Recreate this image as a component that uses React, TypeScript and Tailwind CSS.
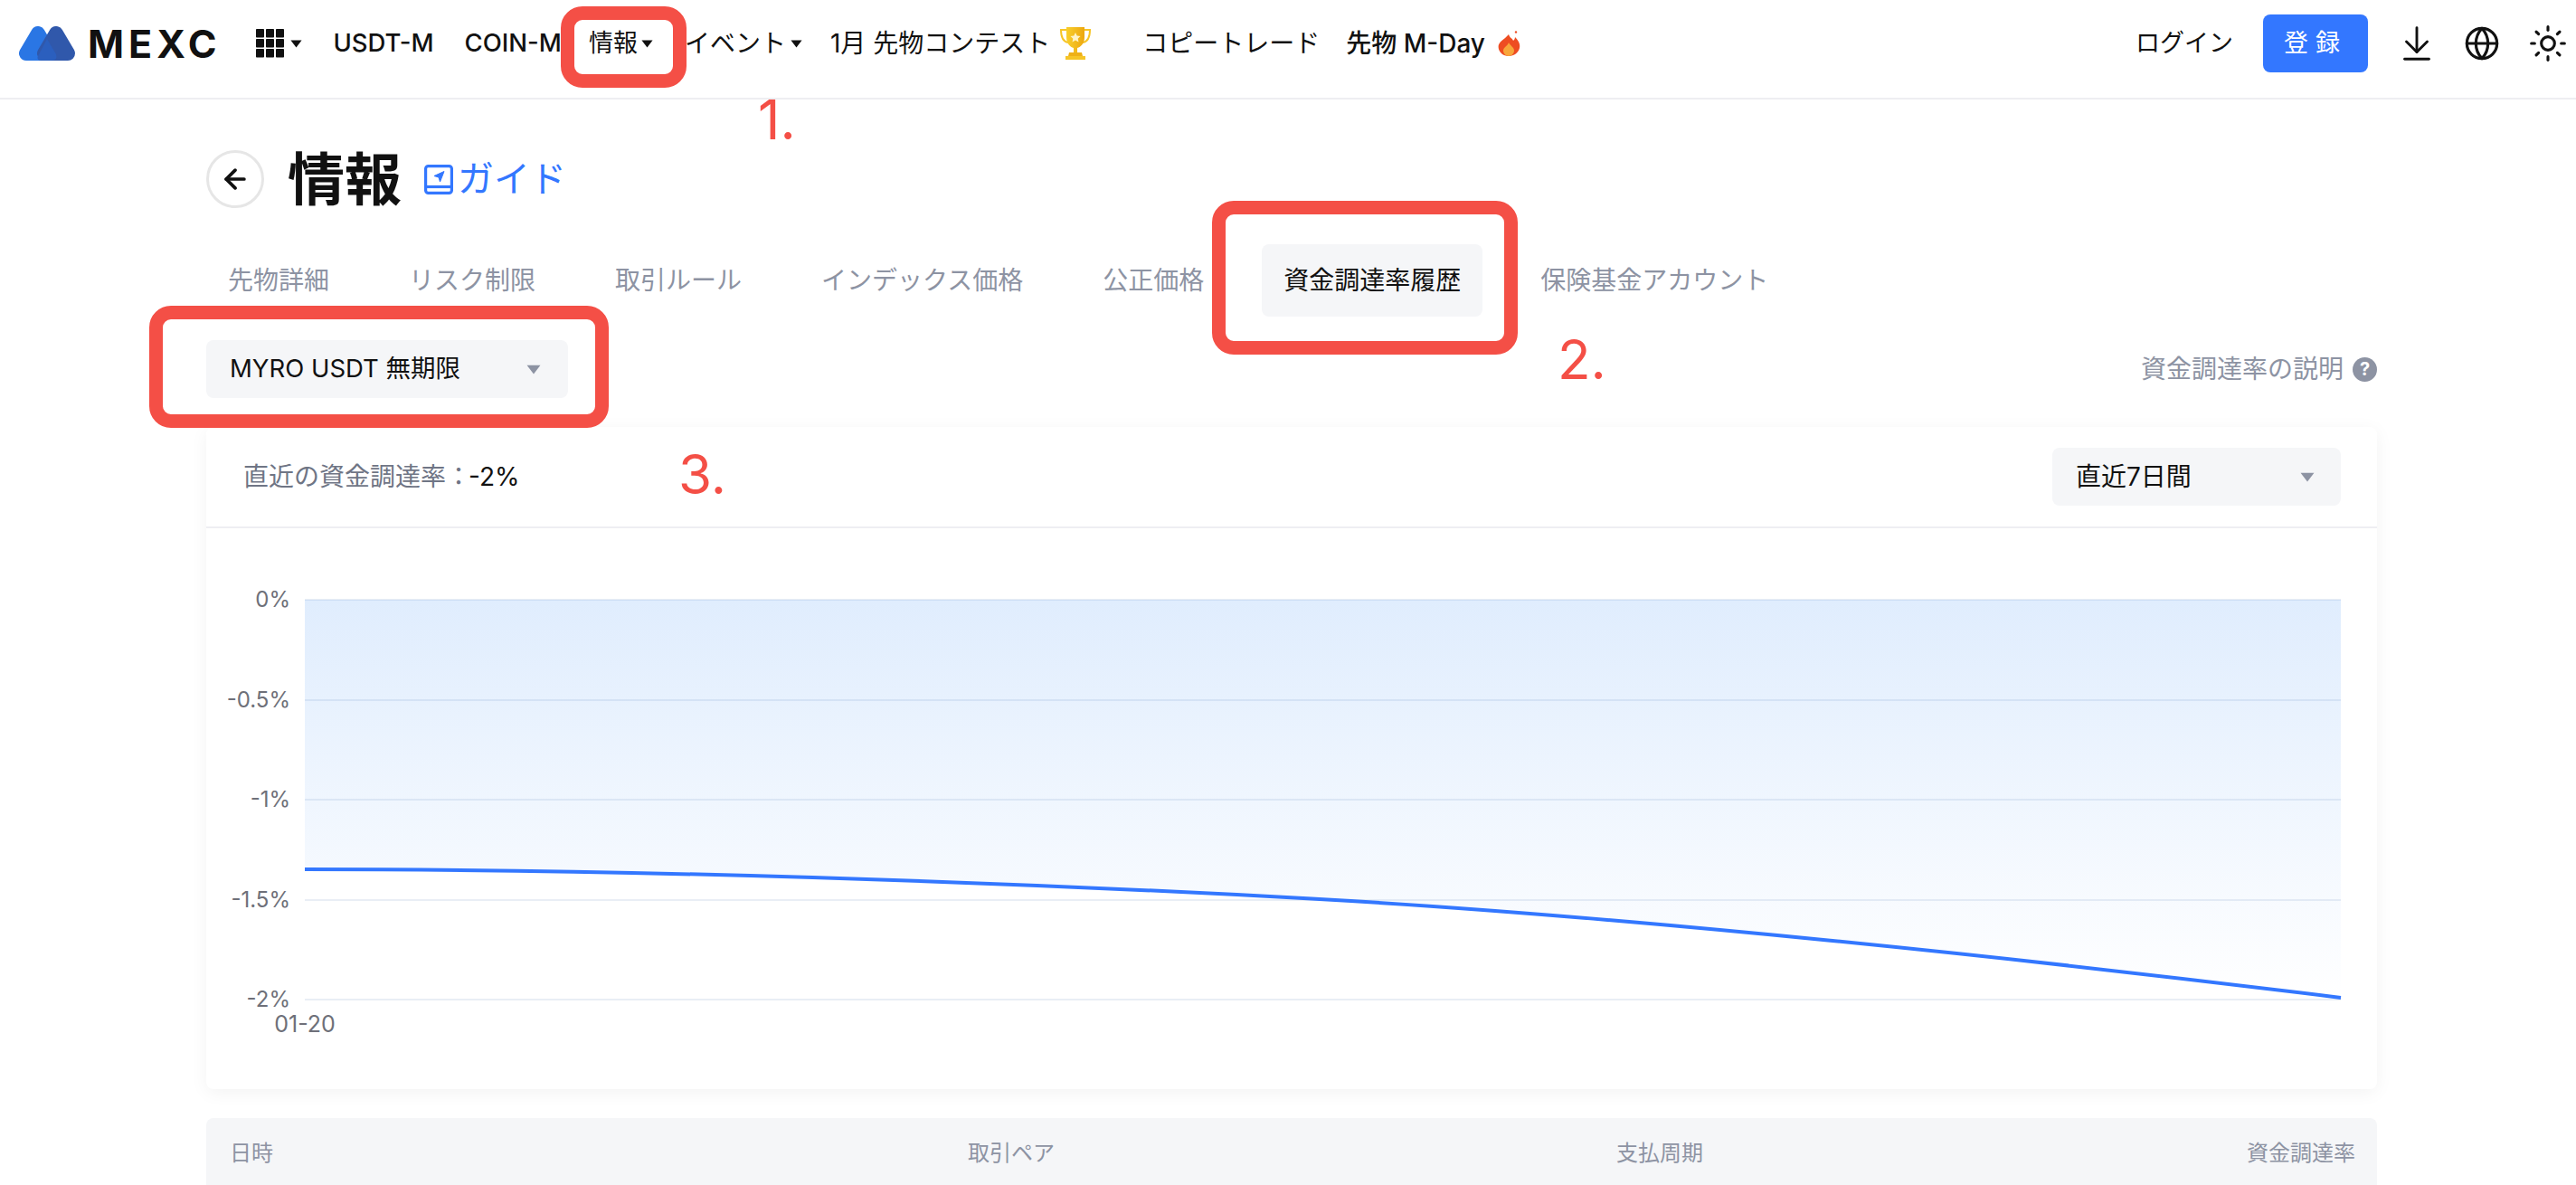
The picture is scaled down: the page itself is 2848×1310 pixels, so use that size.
import { ArrowLeft, ArrowDownToLine, Globe, Sun } from "lucide-react";

const FONT = "font-['Inter','Noto_Sans_CJK_JP',sans-serif]";

const Caret = ({ className }: { className: string }) => (
  <svg viewBox="0 0 12 8" className={`shrink-0 ${className}`} fill="currentColor">
    <path d="M0.4 0.4h11.2L6 7.800z" />
  </svg>
);

const Logo = () => (
  <svg viewBox="0 0 62 38" className="h-[38px] w-[62px] shrink-0">
    <polygon points="21,8 8,30 34,30" fill="#2a76e4" stroke="#2a76e4" strokeWidth="16" strokeLinejoin="round" />
    <polygon points="41,8 28,30 54,30" fill="#3058ab" stroke="#3058ab" strokeWidth="16" strokeLinejoin="round" />
    <path d="M31 14 L41 31 Q43 38 36 38 L25 38 Q20 38 20.5 34z" fill="#2b5fbe" />
  </svg>
);

const GridIcon = () => (
  <svg viewBox="0 0 31 32" className="h-[32px] w-[31px] shrink-0" fill="#111">
    {[0, 11, 22].map((y) =>
      [0, 11, 22].map((x) => <rect key={`${x}-${y}`} x={x} y={y} width="9" height="9.6" rx="0.8" />)
    )}
  </svg>
);

const Trophy = () => (
  <svg viewBox="0 0 36 36" className="h-[36px] w-[36px]">
    <defs>
      <linearGradient id="cup" x1="0" y1="0" x2="1" y2="0">
        <stop offset="0" stopColor="#f8cf2c" />
        <stop offset="1" stopColor="#eda70f" />
      </linearGradient>
    </defs>
    <path d="M8 3H2c0 8 2 13 8 14M28 3h6c0 8-2 13-8 14" fill="none" stroke="#f6c527" strokeWidth="2" />
    <path d="M8 0h20v11c0 7-4 11-8 12v5h-4v-5c-4-1-8-5-8-12z" fill="url(#cup)" />
    <path d="M11 28h14l1 4H10z" fill="#eeb017" />
    <rect x="7" y="32" width="22" height="4" fill="#f6c527" />
    <path d="M18 6l1.7 3.6 3.8.5-2.8 2.6.8 3.9-3.5-2-3.5 2 .8-3.9-2.8-2.6 3.8-.5z" fill="#fff4c8" />
  </svg>
);

const Flame = () => (
  <svg viewBox="0 0 25 28" className="h-[28px] w-[25px]">
    <path d="M12 4c1 4 4 4 5 7 1-1 2-2 2-4 4 4 6 8 5 12-1 5-6 9-12 9S1 24 0.600 18C0.400 12 7 10 12 4z" fill="#ee4d22" />
    <path d="M12 13c1 3 6 5 6 9 0 3-3 6-6 6s-6-3-6-6c0-4 5-5 6-9z" fill="#f8a63a" />
    <circle cx="20" cy="1.500" r="1.200" fill="#ee4d22" />
  </svg>
);

const GuideIcon = () => (
  <svg viewBox="0 0 32 33" className="h-[33px] w-[32px]" fill="none" stroke="#3377ff" strokeWidth="3.200">
    <rect x="1.600" y="1.600" width="28.800" height="29.800" rx="3" />
    <path d="M1.600 24.500h28.800" />
    <path d="M22 7.500l-11 5 5 1.500 1.500 5z" fill="#3377ff" strokeWidth="1" strokeLinejoin="round" />
  </svg>
);

const tabs = ["先物詳細", "リスク制限", "取引ルール", "インデックス価格", "公正価格", "資金調達率履歴", "保険基金アカウント"];

const FundingChart = () => {
  const grid = [
    { label: "0%", y: 663 },
    { label: "-0.5%", y: 774 },
    { label: "-1%", y: 884 },
    { label: "-1.5%", y: 995 },
    { label: "-2%", y: 1105 },
  ];
  // chart coordinates are page coordinates minus the top left of the svg
  const ox = 228;
  const oy = 584;
  const curve = "M337 961 C 700 961, 1100 974.250, 1450 993.500 C 1800 1012.750, 2250 1061, 2588 1103";
  return (
    <svg viewBox={`${ox} ${oy} 2400 620`} className="block h-[620px] w-[2400px]">
      <defs>
        <linearGradient id="area" gradientUnits="userSpaceOnUse" x1="0" y1="663" x2="0" y2="1105">
          <stop offset="0" stopColor="#2f86f5" stopOpacity="0.15" />
          <stop offset="1" stopColor="#2f86f5" stopOpacity="0" />
        </linearGradient>
      </defs>
      {grid.map((g) => (
        <g key={g.label}>
          <line x1="337" x2="2588" y1={g.y} y2={g.y} stroke="#e9eef5" strokeWidth="2" />
          <text x="321" y={g.y + 8} textAnchor="end" fontSize="24" fill="#6e7079" fontFamily="Inter, sans-serif">
            {g.label}
          </text>
        </g>
      ))}
      <path d={`${curve} L2588 663 L337 663 Z`} fill="url(#area)" />
      <path d={curve} fill="none" stroke="#3377ff" strokeWidth="4" />
      <text x="337" y="1141" textAnchor="middle" fontSize="25" fill="#6e7079" fontFamily="Inter, sans-serif">
        01-20
      </text>
    </svg>
  );
};

const Annotation = ({ className }: { className: string }) => (
  <div className={`absolute rounded-[24px] border-[15px] border-[#f44f46] ${className}`} />
);

const Step = ({ className, children }: { className: string; children: string }) => (
  <span className={`absolute text-[60px] leading-none text-[#f44f46] ${className}`}>{children}</span>
);

export default function App() {
  return (
    <div className={`relative h-[1310px] overflow-hidden bg-white ${FONT}`}>
      <header className="flex h-[110px] items-center border-b-2 border-[#eeeef2] pb-[12px] pl-[21px] pr-[9px]">
        <Logo />
        <span className="ml-[14px] text-[43px] font-bold leading-none tracking-[5px] text-[#111]">MEXC</span>
        <div className="ml-[39px] flex items-center">
          <GridIcon />
          <Caret className="ml-[7px] h-[9px] w-[13px] text-[#111]" />
        </div>
        <span className="ml-[34px] whitespace-nowrap text-[27.500px] font-medium text-[#111]">USDT-M</span>
        <span className="ml-[34px] whitespace-nowrap text-[27.500px] font-medium text-[#111]">COIN-M</span>
        <span className="ml-[30px] flex items-center whitespace-nowrap text-[27px] text-[#111]">
          情報
          <Caret className="ml-[4px] h-[9px] w-[13px] text-[#111]" />
        </span>
        <span className="ml-[35px] flex items-center whitespace-nowrap text-[28px] text-[#111]">
          イベント
          <Caret className="ml-[5px] h-[9px] w-[13px] text-[#111]" />
        </span>
        <span className="ml-[31px] whitespace-nowrap text-[28px] text-[#111]">1月 先物コンテスト</span>
        <span className="ml-[10px]">
          <Trophy />
        </span>
        <span className="ml-[56px] whitespace-nowrap text-[28px] text-[#111]">コピートレード</span>
        <span className="ml-[29px] whitespace-nowrap text-[28px] font-medium text-[#111]">先物 M-Day</span>
        <span className="ml-[14px]">
          <Flame />
        </span>
        <div className="ml-auto flex items-center">
          <span className="text-[27px] text-[#111]">ログイン</span>
          <button className="ml-[33px] h-[64px] w-[116px] rounded-[8px] bg-[#3377ff] text-[27px] tracking-[8px] text-white">
            登録
          </button>
          <ArrowDownToLine className="ml-[31px] h-[46px] w-[46px] text-[#111]" strokeWidth={1.5} />
          <Globe className="ml-[29px] h-[40px] w-[40px] text-[#111]" strokeWidth={1.9} />
          <Sun className="ml-[31px] h-[44px] w-[44px] text-[#111]" strokeWidth={1.7} />
        </div>
      </header>

      <main className="pl-[228px] pr-[220px] pt-[56px]">
        <div className="flex h-[64px] items-center">
          <div className="flex h-[64px] w-[64px] items-center justify-center rounded-full border-[3px] border-[#e6e6e6]">
            <ArrowLeft className="h-[34px] w-[34px] text-[#111]" strokeWidth={2.6} />
          </div>
          <h1 className="ml-[26px] text-[63px] font-bold leading-none text-[#111]">情報</h1>
          <span className="ml-[25px]">
            <GuideIcon />
          </span>
          <span className="ml-[5px] text-[40px] leading-none text-[#3377ff]">ガイド</span>
        </div>

        <nav className="mt-[40px] flex h-[80px] items-center gap-[40px]">
          {tabs.map((tab) => (
            <span
              key={tab}
              className={
                tab === "資金調達率履歴"
                  ? "flex h-[80px] items-center rounded-[8px] bg-[#f5f6f8] px-[24px] text-[28px] text-[#111]"
                  : "px-[24px] text-[28px] text-[#8d93a3]"
              }
            >
              {tab}
            </span>
          ))}
        </nav>

        <div className="mt-[26px] flex items-center justify-between">
          <div className="flex h-[64px] w-[400px] items-center justify-between rounded-[8px] bg-[#f5f6f8] pl-[26px] pr-[30px] text-[27.500px] text-[#111]">
            <span>MYRO USDT 無期限</span>
            <Caret className="h-[11px] w-[16px] text-[#8d93a3]" />
          </div>
          <div className="flex items-center gap-[10px] text-[28px] text-[#8d93a3]">
            <span>資金調達率の説明</span>
            <span className="flex h-[27px] w-[27px] items-center justify-center rounded-full bg-[#8d93a3] text-[20px] font-bold leading-none text-white">
              ?
            </span>
          </div>
        </div>

        <section className="mt-[32px] h-[732px] rounded-[8px] bg-white shadow-[0_4px_20px_rgba(0,0,0,0.05)]">
          <div className="flex h-[112px] items-center justify-between border-b-2 border-[#eeeef2] pl-[41px] pr-[40px]">
            <p className="text-[28px] text-[#6f7585]">
              直近の資金調達率：<span className="-ml-[3px] text-[#111]">-2%</span>
            </p>
            <div className="flex h-[64px] w-[319px] items-center justify-between rounded-[8px] bg-[#f5f6f8] pl-[26px] pr-[29px] text-[28px] text-[#111]">
              <span>直近7日間</span>
              <Caret className="h-[11px] w-[16px] text-[#8d93a3]" />
            </div>
          </div>
          <FundingChart />
        </section>

        <div className="mt-[32px] flex h-[78px] items-center rounded-t-[8px] bg-[#f5f6f8] pl-[26px] pr-[24px] text-[24px] text-[#8d93a3]">
          <span className="w-[816px]">日時</span>
          <span className="w-[717px]">取引ペア</span>
          <span>支払周期</span>
          <span className="ml-auto">資金調達率</span>
        </div>
      </main>

      {/* annotations */}
      <Annotation className="left-[620px] top-[7px] h-[90px] w-[139px]" />
      <Annotation className="left-[1340px] top-[222px] h-[170px] w-[338px]" />
      <Annotation className="left-[165px] top-[338px] h-[135px] w-[508px]" />
      <Step className="left-[838px] top-[102px]">1.</Step>
      <Step className="left-[1722px] top-[367px]">2.</Step>
      <Step className="left-[750px] top-[494px]">3.</Step>
    </div>
  );
}
